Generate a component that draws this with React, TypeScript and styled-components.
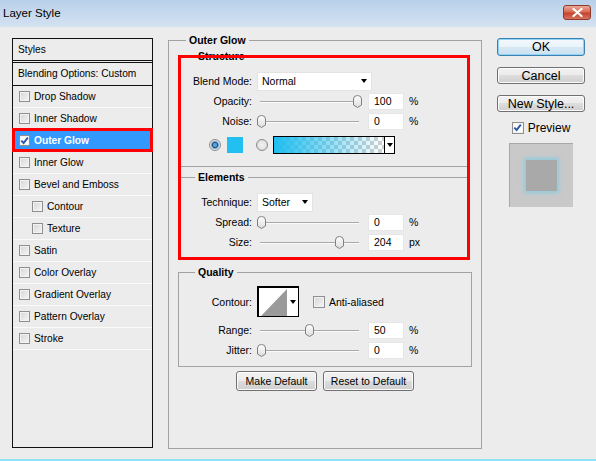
import React from 'react'
import styled, { createGlobalStyle, css } from 'styled-components'

const GlobalStyle = createGlobalStyle`
  html, body {
    margin: 0;
    padding: 0;
  }
  body {
    background: #ececec;
    font-family: "Liberation Sans", Arial, sans-serif;
    font-size: 10px;
    color: #000;
  }
`

const Window = styled.div`
  width: 596px;
  height: 461px;
  box-sizing: border-box;
  display: flex;
  flex-direction: column;
  background: #ececec;
  border-bottom: 2px solid #8ee2f5;
  overflow: hidden;
`

const TitleBar = styled.div`
  height: 27px;
  flex: none;
  display: flex;
  align-items: flex-start;
  justify-content: space-between;
  background: linear-gradient(#b9d0ea, #d4e2f1);
`

const Title = styled.span`
  font-size: 11.5px;
  line-height: 26px;
  padding-left: 3px;
`

const CloseButton = styled.div`
  margin: 5px 5px 0 0;
  width: 28px;
  height: 15px;
  box-sizing: border-box;
  border: 1px solid #8d3a2b;
  border-radius: 3px;
  background: linear-gradient(#eba999, #d86b56 45%, #c5432c 55%, #d57460);
  display: flex;
  align-items: center;
  justify-content: center;
`

const Body = styled.div`
  flex: 1;
  display: flex;
  align-items: flex-start;
  padding: 6px 0 0 12px;
`

/* ---------- left styles list ---------- */

const StylesPanel = styled.div`
  margin-top: 5px;
  width: 141px;
  height: 410px;
  box-sizing: border-box;
  border: 1px solid #111;
  flex: none;
  font-size: 10.2px;
`

const PanelHeader = styled.div`
  height: 24px;
  box-sizing: border-box;
  line-height: 21px;
  padding-left: 5px;
  border-bottom: 3px double #111;
`

const BlendingRow = styled.div`
  height: 23px;
  box-sizing: border-box;
  line-height: 22px;
  padding-left: 5px;
  border-bottom: 1px solid #111;
`

const StyleRow = styled.div<{ $indent?: boolean; $selected?: boolean }>`
  position: relative;
  height: 22px;
  box-sizing: border-box;
  display: flex;
  align-items: center;
  gap: 4px;
  padding-left: ${p => (p.$indent ? 19 : 6)}px;
  border-bottom: 1px solid #fafafa;
  ${p =>
    p.$selected &&
    css`
      background: #3399ff;
      color: #fff;
      font-weight: bold;
      &::after {
        content: '';
        position: absolute;
        top: -2px;
        left: -1px;
        right: -1px;
        bottom: -1px;
        border: 3px solid #f00;
        pointer-events: none;
      }
    `}
`

const Check = styled.span<{ $size?: number; $checked?: boolean }>`
  width: ${p => p.$size ?? 11}px;
  height: ${p => p.$size ?? 11}px;
  box-sizing: border-box;
  flex: none;
  border: 1px solid #8f8f8f;
  background: ${p => (p.$checked ? '#fdfdfd' : 'linear-gradient(135deg, #d6d6d6, #f5f5f5)')};
  box-shadow: inset 0 0 0 1px #f3f3f3;
  display: flex;
  align-items: center;
  justify-content: center;
`

/* ---------- group boxes ---------- */

const GroupBox = styled.fieldset<{ $width: number; $height: number }>`
  margin: 0;
  padding: 0;
  min-inline-size: auto;
  box-sizing: border-box;
  width: ${p => p.$width}px;
  height: ${p => p.$height}px;
  border: 1px solid #a2a2a2;
  flex: none;
`

const MainGroup = styled(GroupBox)`
  margin-left: 15px;
`

const QualityGroup = styled(GroupBox)`
  margin: 6px 0 0 9px;
`

const ElementsGroup = styled(GroupBox)`
  margin-top: 3px;
`

const Legend = styled.legend`
  margin-left: 16px;
  padding: 0 3px;
  font-weight: bold;
  font-size: 10.5px;
  line-height: 14px;
`

const Annotated = styled.div`
  position: relative;
  margin: 2px 0 0 9px;
  width: 292px;
  &::after {
    content: '';
    position: absolute;
    top: 6px;
    left: 0;
    right: 0;
    bottom: -1px;
    border: 3px solid #f00;
    pointer-events: none;
  }
`

const Stack = styled.div<{ $pt?: number }>`
  display: flex;
  flex-direction: column;
  padding-top: ${p => p.$pt ?? 0}px;
`

const Row = styled.div<{ $h?: number; $mt?: number }>`
  display: flex;
  align-items: center;
  height: ${p => p.$h ?? 20}px;
  margin-top: ${p => p.$mt ?? 0}px;
`

const Label = styled.span`
  width: 73px;
  margin-right: 5px;
  text-align: right;
  flex: none;
  font-size: 10.5px;
`

const Select = styled.div<{ $w: number }>`
  width: ${p => p.$w}px;
  height: 19px;
  box-sizing: border-box;
  background: #fff;
  border: 1px solid #e3e3e3;
  display: flex;
  align-items: center;
  justify-content: space-between;
  padding: 0 4px;
  font-size: 10.5px;
`

const Caret = styled.span`
  width: 0;
  height: 0;
  border-left: 3.5px solid transparent;
  border-right: 3.5px solid transparent;
  border-top: 4px solid #000;
`

const SliderTrack = styled.div`
  position: relative;
  width: 105px;
  height: 13px;
  flex: none;
  &::before {
    content: '';
    position: absolute;
    left: 3px;
    right: 3px;
    top: 6px;
    height: 1px;
    background: #a8a8a8;
    box-shadow: 0 1px 0 #fbfbfb;
  }
`

const Thumb = styled.svg`
  position: absolute;
  top: 0;
`

const NumberField = styled.div`
  width: 36px;
  height: 17px;
  box-sizing: border-box;
  margin-left: 6px;
  background: #fff;
  border: 1px solid #e6e6e6;
  padding-left: 5px;
  line-height: 15px;
  font-size: 10.5px;
`

const Unit = styled.span`
  margin-left: 5px;
  font-size: 10.5px;
`

const Radio = styled.span<{ $on?: boolean }>`
  width: 12px;
  height: 12px;
  box-sizing: border-box;
  border-radius: 50%;
  border: 1px solid #8a8a8a;
  flex: none;
  background: radial-gradient(circle, #f4f4f4, #d4d4d4);
  ${p =>
    p.$on &&
    css`
      background: radial-gradient(circle, #5aa3d8 0 1.5px, #1c4f82 2.5px, #8bbde0 3.8px, #e9e9e9 4.6px);
    `}
`

const ColorRow = styled(Row)`
  padding-left: 30px;
`

const Swatch = styled.span<{ $color: string }>`
  width: 16px;
  height: 16px;
  margin: 0 13px 0 6px;
  background: ${p => p.$color};
  flex: none;
`

const GradientPicker = styled.div`
  width: 122px;
  height: 18px;
  margin-left: 5px;
  box-sizing: border-box;
  border: 1px solid #000;
  display: flex;
`

const GradientFill = styled.div`
  flex: 1;
  background: linear-gradient(to right, rgba(30, 190, 240, 1), rgba(30, 190, 240, 0)),
    repeating-conic-gradient(#cfcfcf 0 25%, #fff 0 50%) 0 0 / 8px 8px;
`

const PickerArrow = styled.div<{ $w: number }>`
  width: ${p => p.$w}px;
  background: #fff;
  display: flex;
  align-items: center;
  justify-content: center;
  flex: none;
`

const GradientArrow = styled(PickerArrow)`
  border-left: 1px solid #000;
`

const ContourPicker = styled.div`
  width: 42px;
  height: 31px;
  box-sizing: border-box;
  border: 1px solid #000;
  border-width: 2px 1px 1px 2px;
  display: flex;
  background: #fff;
`

const AntiAlias = styled.span`
  margin-left: 4px;
  font-size: 10.5px;
`

const ButtonRow = styled.div`
  margin-top: 4px;
  display: flex;
  justify-content: center;
  gap: 6px;
`

const PushButton = styled.div<{ $w: number }>`
  width: ${p => p.$w}px;
  height: 20px;
  box-sizing: border-box;
  border: 1px solid #707070;
  border-radius: 3px;
  background: linear-gradient(#f2f2f2 0%, #ebebeb 49%, #dddddd 50%, #cfcfcf 100%);
  box-shadow: inset 0 0 0 1px #fbfbfb;
  display: flex;
  align-items: center;
  justify-content: center;
  font-size: 10.5px;
`

/* ---------- right column ---------- */

const SideColumn = styled.div`
  margin: 5px 0 0 15px;
  width: 88px;
  display: flex;
  flex-direction: column;
  align-items: center;
  flex: none;
`

const DialogButton = styled(PushButton)<{ $default?: boolean; $mt?: number }>`
  height: 17px;
  margin-top: ${p => p.$mt ?? 0}px;
  font-size: 12.5px;
  ${p =>
    p.$default &&
    css`
      height: 18px;
      border-color: #3c7fb1;
      box-shadow: inset 0 0 0 1px #8fd3f5;
      background: linear-gradient(#f4f9fc 0%, #e9f3fa 49%, #d8e8f4 50%, #c9e1f2 100%);
    `}
`

const PreviewToggle = styled.label`
  margin-top: 9px;
  display: flex;
  align-items: center;
  gap: 4px;
  font-size: 12px;
  height: 13px;
`

const PreviewBox = styled.div`
  margin-top: 9px;
  width: 64px;
  height: 64px;
  box-sizing: border-box;
  background: #c9c9c9;
  border-top: 1px solid #a8a8a8;
  border-left: 1px solid #a8a8a8;
  display: flex;
  align-items: center;
  justify-content: center;
`

const PreviewSwatch = styled.div`
  width: 31px;
  height: 31px;
  background: #a9a9a9;
  box-shadow: 0 0 4px 2px rgba(96, 205, 240, 0.55);
`

/* ---------- bits ---------- */

const Tick = () => (
  <svg width="9" height="9" viewBox="0 0 9 9">
    <path d="M1.3 4.6 L3.6 7 L7.8 1.6" fill="none" stroke="#2a55a8" strokeWidth="1.9" />
  </svg>
)

const Slider = ({ value, max }: { value: number; max: number }) => (
  <SliderTrack>
    <Thumb width="9" height="13" viewBox="0 0 9 13" style={{ left: Math.round((value / max) * 96) }}>
      <defs>
        <linearGradient id="thumbFill" x1="0" y1="0" x2="0" y2="1">
          <stop offset="0" stopColor="#ffffff" />
          <stop offset="1" stopColor="#dcdcdc" />
        </linearGradient>
      </defs>
      <path d="M0.5 4 Q0.5 0.5 4.5 0.5 Q8.5 0.5 8.5 4 L8.5 10 L4.5 12.5 L0.5 10 Z" fill="url(#thumbFill)" stroke="#808080" />
    </Thumb>
  </SliderTrack>
)

const SliderRow = ({ label, value, max = 100, unit = '%' }: { label: string; value: number; max?: number; unit?: string }) => (
  <Row>
    <Label>{label}</Label>
    <Slider value={value} max={max} />
    <NumberField>{value}</NumberField>
    <Unit>{unit}</Unit>
  </Row>
)

const styleItems: { name: string; indent?: boolean; checked?: boolean }[] = [
  { name: 'Drop Shadow' },
  { name: 'Inner Shadow' },
  { name: 'Outer Glow', checked: true },
  { name: 'Inner Glow' },
  { name: 'Bevel and Emboss' },
  { name: 'Contour', indent: true },
  { name: 'Texture', indent: true },
  { name: 'Satin' },
  { name: 'Color Overlay' },
  { name: 'Gradient Overlay' },
  { name: 'Pattern Overlay' },
  { name: 'Stroke' },
]

const App = () => {
  return (
    <>
      <GlobalStyle />
      <Window>
        <TitleBar>
          <Title>Layer Style</Title>
          <CloseButton>
            <svg width="11" height="9" viewBox="0 0 11 9">
              <path d="M1.5 1 L9.5 8 M9.5 1 L1.5 8" stroke="#fff" strokeWidth="2.2" strokeLinecap="round" />
            </svg>
          </CloseButton>
        </TitleBar>

        <Body>
          <StylesPanel>
            <PanelHeader>Styles</PanelHeader>
            <BlendingRow>Blending Options: Custom</BlendingRow>
            {styleItems.map(item => (
              <StyleRow key={item.name} $indent={item.indent} $selected={item.checked}>
                <Check $checked={item.checked}>{item.checked && <Tick />}</Check>
                {item.name}
              </StyleRow>
            ))}
          </StylesPanel>

          <MainGroup $width={314} $height={416}>
            <Legend style={{ marginLeft: 17 }}>Outer Glow</Legend>

            <Annotated>
              <GroupBox $width={292} $height={118}>
                <Legend>Structure</Legend>
                <Stack $pt={8}>
                  <Row>
                    <Label>Blend Mode:</Label>
                    <Select $w={115}>
                      Normal
                      <Caret />
                    </Select>
                  </Row>
                  <SliderRow label="Opacity:" value={100} />
                  <SliderRow label="Noise:" value={0} />
                  <ColorRow $h={18} $mt={5}>
                    <Radio $on />
                    <Swatch $color="#22c0f0" />
                    <Radio />
                    <GradientPicker>
                      <GradientFill />
                      <GradientArrow $w={9}>
                        <Caret />
                      </GradientArrow>
                    </GradientPicker>
                  </ColorRow>
                </Stack>
              </GroupBox>

              <ElementsGroup $width={292} $height={89}>
                <Legend>Elements</Legend>
                <Stack>
                  <Row $mt={8}>
                    <Label>Technique:</Label>
                    <Select $w={56}>
                      Softer
                      <Caret />
                    </Select>
                  </Row>
                  <SliderRow label="Spread:" value={0} />
                  <SliderRow label="Size:" value={204} max={250} unit="px" />
                </Stack>
              </ElementsGroup>
            </Annotated>

            <QualityGroup $width={294} $height={102}>
              <Legend>Quality</Legend>
              <Stack>
                <Row $h={31} $mt={7}>
                  <Label>Contour:</Label>
                  <ContourPicker>
                    <svg width="28" height="28" viewBox="0 0 28 28">
                      <polygon points="2,28 28,1 28,28" fill="#9a9a9a" />
                    </svg>
                    <PickerArrow $w={11}>
                      <Caret />
                    </PickerArrow>
                  </ContourPicker>
                  <Check $size={12} style={{ marginLeft: 14 }} />
                  <AntiAlias>Anti-aliased</AntiAlias>
                </Row>
                <Row $mt={3}>
                  <Label>Range:</Label>
                  <Slider value={50} max={100} />
                  <NumberField>50</NumberField>
                  <Unit>%</Unit>
                </Row>
                <SliderRow label="Jitter:" value={0} />
              </Stack>
            </QualityGroup>

            <ButtonRow>
              <PushButton $w={81}>Make Default</PushButton>
              <PushButton $w={91}>Reset to Default</PushButton>
            </ButtonRow>
          </MainGroup>

          <SideColumn>
            <DialogButton $w={88} $default>OK</DialogButton>
            <DialogButton $w={88} $mt={11}>Cancel</DialogButton>
            <DialogButton $w={88} $mt={11}>New Style...</DialogButton>
            <PreviewToggle>
              <Check $size={12} $checked>
                <Tick />
              </Check>
              Preview
            </PreviewToggle>
            <PreviewBox>
              <PreviewSwatch />
            </PreviewBox>
          </SideColumn>
        </Body>
      </Window>
    </>
  )
}

export default App
